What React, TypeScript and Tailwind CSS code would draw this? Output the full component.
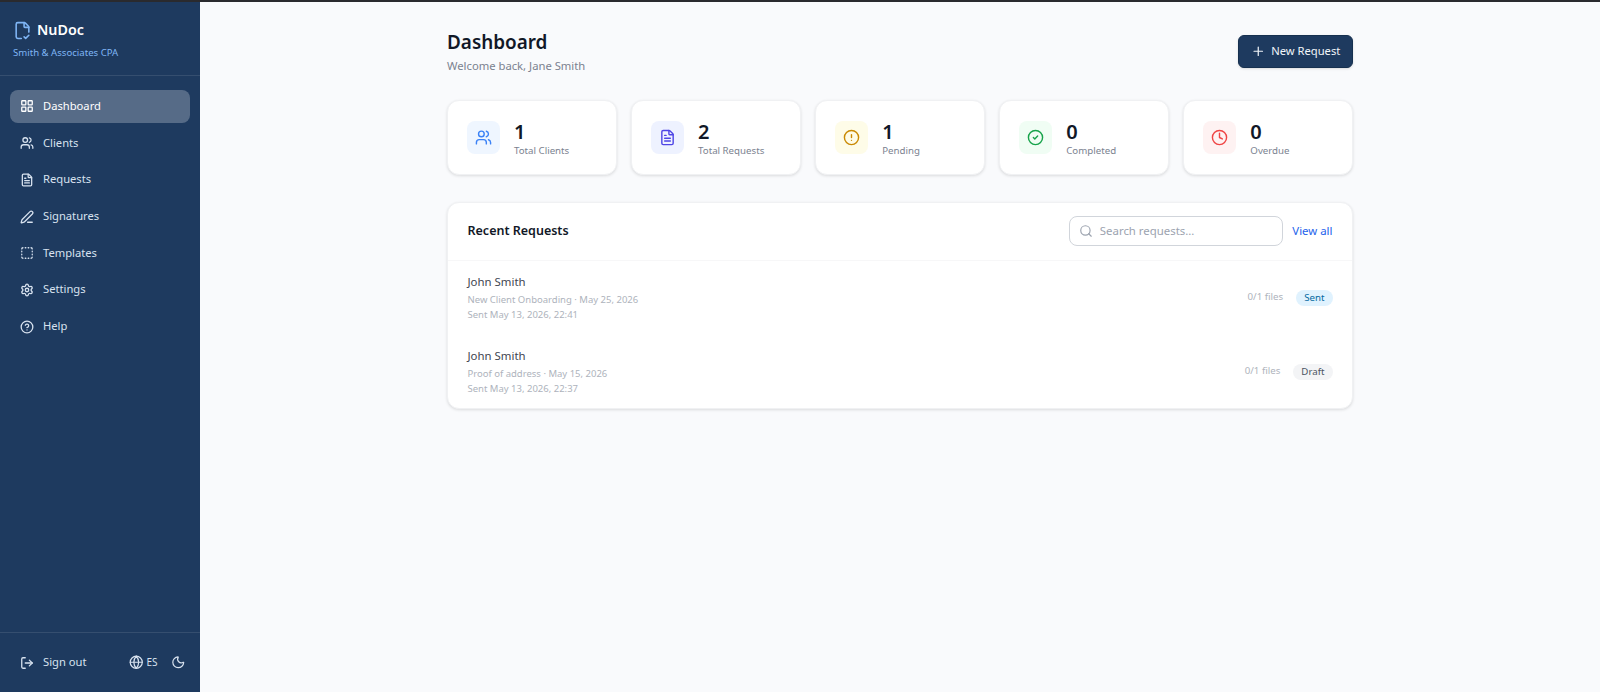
import React from "react";
import { LayoutGrid, Users, FileText, PenLine, SquareDashed, Settings, CircleHelp, LogOut, Globe, Moon, Plus, CircleAlert, CircleCheck, Clock, Search, FileCheck2 } from "lucide-react";

const nav = [
  { label: "Dashboard", Icon: LayoutGrid, active: true },
  { label: "Clients", Icon: Users },
  { label: "Requests", Icon: FileText },
  { label: "Signatures", Icon: PenLine },
  { label: "Templates", Icon: SquareDashed },
  { label: "Settings", Icon: Settings },
  { label: "Help", Icon: CircleHelp },
];

const stats = [
  { value: "1", label: "Total Clients", Icon: Users, bg: "bg-[#eff6ff]", fg: "text-[#3b82f6]" },
  { value: "2", label: "Total Requests", Icon: FileText, bg: "bg-[#eef2ff]", fg: "text-[#4f46e5]" },
  { value: "1", label: "Pending", Icon: CircleAlert, bg: "bg-[#fefce8]", fg: "text-[#ca8a04]" },
  { value: "0", label: "Completed", Icon: CircleCheck, bg: "bg-[#f0fdf4]", fg: "text-[#16a34a]" },
  { value: "0", label: "Overdue", Icon: Clock, bg: "bg-[#fef2f2]", fg: "text-[#ef4444]" },
];

const rows = [
  { name: "John Smith", sub: "New Client Onboarding · May 25, 2026", sent: "Sent May 13, 2026, 22:41", status: "Sent", cls: "bg-[#e0f2fe] text-[#0369a1] px-[8px]" },
  { name: "John Smith", sub: "Proof of address · May 15, 2026", sent: "Sent May 13, 2026, 22:37", status: "Draft", cls: "bg-[#f3f4f6] text-[#4b5563] px-[8px]" },
];

export default function App() {
  return (
    <div className="flex h-[692px] w-[1600px] flex-col overflow-hidden bg-[#f9fafc] font-['Noto_Sans',sans-serif]">
      <div className="h-[2px] shrink-0 bg-[#2a2a2e]" />
      <div className="flex min-h-0 flex-1">
        <aside className="flex w-[200px] shrink-0 flex-col bg-[#1e3a5f]">
          <div className="h-[74px] border-b border-white/10 px-[13px] pt-[18px]">
            <div className="flex items-center gap-[5px]">
              <FileCheck2 className="size-[19px] text-[#7fb5f5]" strokeWidth={2} />
              <span className="text-[14.3px] leading-5 font-semibold text-white">NuDoc</span>
            </div>
            <div className="mt-[5px] text-[9.6px] leading-4 text-[#7fb5f5]">Smith &amp; Associates CPA</div>
          </div>
          <nav className="flex flex-col gap-[3px] px-[10px] pt-[13.6px]">
            {nav.map(({ label, Icon, active }) => (
              <div key={label} className={`flex h-[33.7px] items-center gap-[9px] rounded-lg px-[10px] text-[11.2px] ${active ? "bg-white/25 text-white" : "text-[#d8e2ef]"}`}>
                <Icon className="size-[14px]" strokeWidth={2.2} />
                <span>{label}</span>
              </div>
            ))}
          </nav>
          <div className="mt-auto flex h-[60px] items-center border-t border-white/10 pr-[15px] pl-[20px] text-[11.2px] text-[#d8e2ef]">
            <LogOut className="size-[14px]" strokeWidth={2.2} />
            <span className="ml-[9px]">Sign out</span>
            <Globe className="ml-auto size-[14.5px]" />
            <span className="ml-[2.5px] text-[10px]">ES</span>
            <Moon className="ml-[13px] size-[14.5px]" />
          </div>
        </aside>
        <main className="min-w-0 flex-1">
          <div className="mx-auto w-[906px] pt-[28px]">
            <div className="flex items-start justify-between">
              <div>
                <h1 className="text-[18.9px] leading-[24px] font-semibold text-[#111827]">Dashboard</h1>
                <p className="mt-[4px] text-[11.25px] leading-4 text-[#7b8290]">Welcome back, Jane Smith</p>
              </div>
              <button className="mt-[5px] flex h-[33px] w-[115px] items-center justify-center gap-[6px] rounded-md border border-[#16304f] bg-[#1e3a5f] text-[11.2px] text-[#f1f5f9] shadow-sm">
                <Plus className="size-[14.5px]" />
                New Request
              </button>
            </div>
            <div className="mt-[26px] grid grid-cols-5 gap-[14.4px]">
              {stats.map(({ value, label, Icon, bg, fg }) => (
                <div key={label} className="flex h-[75px] items-center gap-[14px] rounded-xl border border-[#f0f1f3] bg-white px-[19px] shadow-[0_1px_3px_rgba(0,0,0,0.12)]">
                  <div className={`flex size-[33px] items-center justify-center rounded-lg ${bg} ${fg}`}>
                    <Icon className="size-[17px]" />
                  </div>
                  <div className="pt-[2px]">
                    <div className="text-[20px] leading-[24px] font-semibold text-[#111827]">{value}</div>
                    <div className="text-[9.7px] leading-[14px] text-[#7b8290]">{label}</div>
                  </div>
                </div>
              ))}
            </div>
            <section className="mt-[26.5px] h-[207px] rounded-xl border border-[#f0f1f3] bg-white shadow-[0_1px_3px_rgba(0,0,0,0.12)]">
              <div className="flex h-[58px] items-center border-b border-[#f7f7f8] px-[19.5px]">
                <h2 className="text-[12.5px] font-semibold text-[#111827]">Recent Requests</h2>
                <div className="ml-auto flex h-[30px] w-[214px] items-center gap-[7px] rounded-lg border border-[#d1d5db] px-[9px] text-[11.4px] text-[#9ca3af]">
                  <Search className="size-[14px]" />
                  <span>Search requests...</span>
                </div>
                <a className="ml-[9.5px] text-[11.4px] text-[#2563eb]">View all</a>
              </div>
              {rows.map((r) => (
                <div key={r.sub} className="flex h-[74px] items-center justify-between px-[19.5px]">
                  <div>
                    <div className="text-[11.4px] leading-[17px] text-[#414550]">{r.name}</div>
                    <div className="mt-[2px] text-[9.5px] leading-[15px] text-[#aeb3bc]">{r.sub}</div>
                    <div className="text-[9.5px] leading-[15px] text-[#aeb3bc]">{r.sent}</div>
                  </div>
                  <div className="flex items-center gap-[13px]">
                    <span className="text-[9.7px] text-[#aeb3bc]">0/1 files</span>
                    <span className={`rounded-full py-[1px] text-[9.7px] leading-[14px] ${r.cls}`}>{r.status}</span>
                  </div>
                </div>
              ))}
            </section>
          </div>
        </main>
      </div>
    </div>
  );
}
